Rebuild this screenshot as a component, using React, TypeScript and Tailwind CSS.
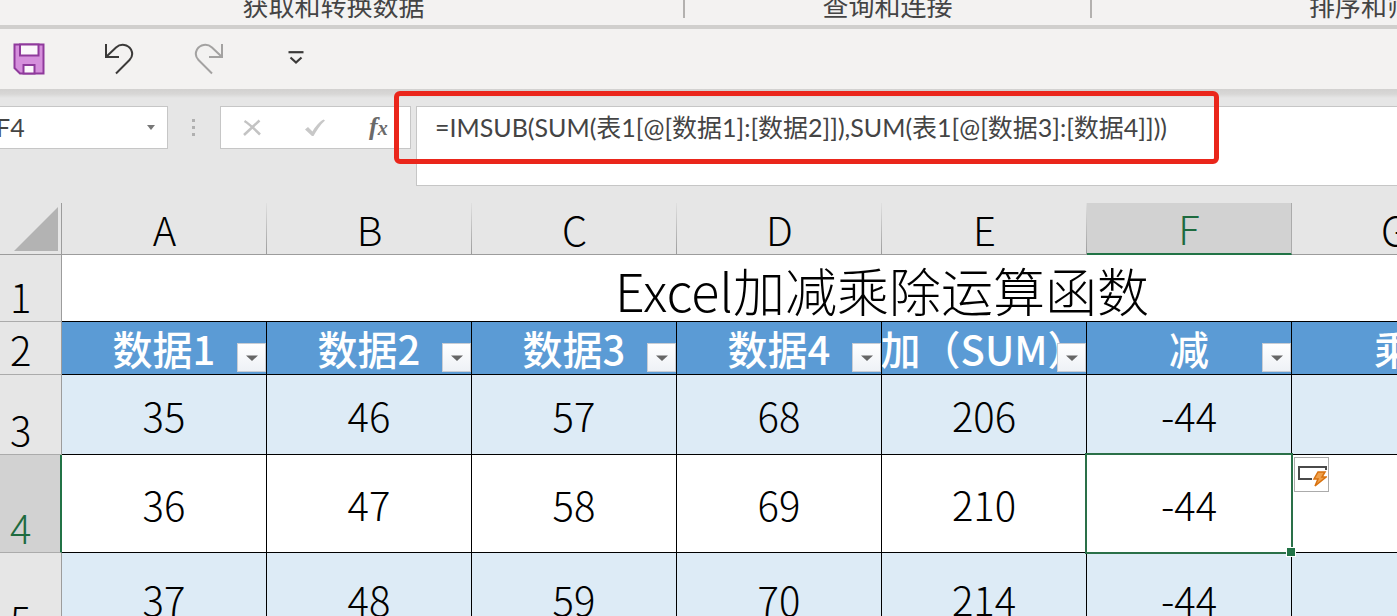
import { useState } from 'react';
import clsx from 'clsx';

const COLUMNS = ['A', 'B', 'C', 'D', 'E', 'F', 'G', 'H'];
const HEADERS = ['数据1', '数据2', '数据3', '数据4', '加（SUM）', '减', '乘', '除'];

interface Row {
  id: number;
  height: string;
  cells: string[];
}

const ROWS: Row[] = [
  { id: 3, height: 'h-20', cells: ['35', '46', '57', '68', '206', '-44', '', ''] },
  { id: 4, height: 'h-[98px]', cells: ['36', '47', '58', '69', '210', '-44', '', ''] },
  { id: 5, height: 'h-[92px]', cells: ['37', '48', '59', '70', '214', '-44', '', ''] },
];

const RIBBON_GROUPS = [
  { label: '获取和转换数据', width: '-ml-4 w-[701px]' },
  { label: '查询和连接', width: 'w-[407px]' },
  { label: '排序和筛选', width: 'w-[566px]' },
];

const ACTIVE = { col: 5, row: 4 };

function SaveIcon() {
  return (
    <svg width="32" height="32" viewBox="0 0 32 32" fill="none" stroke="#8f3a9c" strokeWidth="2">
      <path d="M1.5 1.5h29v29H7l-5.500-5.500z" fill="#d58fdc" />
      <path d="M7 1.500h18.500v11H7z" fill="#fbf7fb" />
      <path d="M10.500 30.500v-8.500h11v8.500z" fill="#fbf7fb" />
    </svg>
  );
}

function UndoIcon() {
  return (
    <svg width="30" height="32" viewBox="0 0 30 32" fill="none" stroke="#3b3a39" strokeWidth="2">
      <path d="M2 1v13h13" />
      <path d="M2 14L12 4.500C17 0 24 1.500 27 6.500c2 4 1 8-1.500 10.500L12 30.500" />
    </svg>
  );
}

function RedoIcon() {
  return (
    <svg width="30" height="32" viewBox="0 0 30 32" fill="none" stroke="#a3a2a1" strokeWidth="2">
      <path d="M28 1v13H15" />
      <path d="M28 14L18 4.500C13 0 6 1.500 3 6.500c-2 4-1 8 1.500 10.500L18 30.500" />
    </svg>
  );
}

function Ribbon() {
  return (
    <div className="flex h-[29px] shrink-0 overflow-hidden border-b-4 border-[#d0cfcd]">
      {RIBBON_GROUPS.map((g) => (
        <div key={g.label} className={clsx('flex shrink-0 items-end', g.width)}>
          <span className="mb-[2px] flex-1 whitespace-nowrap text-center text-[26px] leading-9 text-[#444444]">
            {g.label}
          </span>
          <span className="mb-[7px] h-9 w-[2px] bg-[#b3b1af]" />
        </div>
      ))}
    </div>
  );
}

function QuickAccess() {
  return (
    <div className="flex h-[60px] shrink-0 items-center pl-[13px]">
      <button aria-label="保存">
        <SaveIcon />
      </button>
      <button aria-label="撤消" className="ml-[59px]">
        <UndoIcon />
      </button>
      <button aria-label="恢复" className="ml-[60px]">
        <RedoIcon />
      </button>
      <button aria-label="自定义快速访问工具栏" className="ml-16">
        <svg width="16" height="16" viewBox="0 0 16 16" fill="none" stroke="#3b3a39" strokeWidth="2.200">
          <path d="M0.500 1.200h15" />
          <path d="M2.500 6.500l5.500 5 5.500-5" />
        </svg>
      </button>
    </div>
  );
}

function FormulaBar() {
  const [formula, setFormula] = useState(
    '=IMSUB(SUM(表1[@[数据1]:[数据2]]),SUM(表1[@[数据3]:[数据4]]))',
  );
  const [name, setName] = useState('F4');

  return (
    <div className="relative flex h-[114px] shrink-0 items-start bg-[linear-gradient(#d2d1d0,#d8d7d6_5px,#e6e6e6_9px)] pt-[17px] font-[Lato,'Noto_Sans_CJK_SC',sans-serif] text-[25px] text-[#444444]">
      <div className="flex h-[43px] w-[168px] items-center border border-l-0 border-[#c6c6c6] bg-white">
        <input
          aria-label="名称框"
          value={name}
          onChange={(e) => setName(e.target.value)}
          className="-ml-1 w-0 flex-1 outline-none"
        />
        <button aria-label="名称列表" className="mr-3 flex">
          <svg width="8" height="5" viewBox="0 0 8 5" fill="#777777">
            <path d="M0 0h8L4 5z" />
          </svg>
        </button>
      </div>

      <svg className="ml-6 mt-3" width="4" height="20" viewBox="0 0 4 20" fill="#b0b0b0">
        <path d="M0 1h3v3H0zM0 8h3v3H0zM0 15h3v3H0z" />
      </svg>

      <div className="ml-6 flex h-[43px] w-[191px] items-center border border-[#c6c6c6] bg-white pl-[22px]">
        <button aria-label="取消" className="flex">
          <svg width="18" height="18" viewBox="0 0 18 18" fill="none" stroke="#c3c3c3" strokeWidth="2.500">
            <path d="M1 16L16.500 1.500M1.500 2c5 3 10 8 15.500 13.500" />
          </svg>
        </button>
        <button aria-label="输入" className="ml-11 flex">
          <svg width="20" height="18" viewBox="0 0 20 18" fill="#c8c8c8">
            <path d="M0 10.500L3 8l4.500 4.500C10 8 14 3 18.500 0.500L20 1.500C15 6 11.500 11.500 8.500 17H7z" />
          </svg>
        </button>
        <button
          aria-label="插入函数"
          className="ml-11 font-['Liberation_Serif',serif] text-[26px] leading-6 font-bold text-[#6a6a6a] italic"
        >
          f<span className="text-xl">x</span>
        </button>
      </div>

      <textarea
        aria-label="编辑栏"
        value={formula}
        onChange={(e) => setFormula(e.target.value)}
        spellCheck={false}
        className="ml-[5px] h-20 min-w-0 flex-1 resize-none overflow-hidden border border-r-0 border-[#c6c6c6] bg-white pt-1 pl-[18px] leading-8 whitespace-nowrap outline-none"
      />

      {/* callout around the formula */}
      <div className="pointer-events-none absolute top-[2px] left-[394px] h-[73px] w-[825px] rounded-md border-5 border-[#ea261b]" />
    </div>
  );
}

function FilterButton({ label }: { label: string }) {
  return (
    <button
      aria-label={`筛选 ${label}`}
      className="absolute right-0 bottom-[2px] flex h-[29px] w-[29px] items-center justify-center border border-[#c9cdd4] bg-linear-to-b from-white to-[#eef1f6]"
    >
      <svg width="12" height="6" viewBox="0 0 12 6" fill="#666666">
        <path d="M0 0.500h12L6 6z" />
      </svg>
    </button>
  );
}

function Selection() {
  return (
    <>
      <div className="pointer-events-none absolute -inset-x-[2px] -inset-y-[2px] z-10 border-2 border-[#2a7048]" />
      <span className="absolute -right-1 -bottom-1 z-20 h-2 w-2 bg-[#217346] outline outline-white" />
      <button
        aria-label="快速填充选项"
        className="absolute top-[2px] left-full z-20 ml-[3px] flex h-[35px] w-[35px] items-center justify-center border border-[#ababab] bg-white"
      >
        <svg width="30" height="24" viewBox="0 0 30 24" fill="none">
          <path d="M15 16H2V4h27v3" stroke="#4a4a4a" strokeWidth="2" />
          <path d="M21 9h7l-3 5h4L18 23l3-7h-4z" fill="#f0a04a" stroke="#d8720f" strokeWidth="1.500" />
        </svg>
      </button>
    </>
  );
}

function RowHeader({ id, active }: { id: number; active?: boolean }) {
  return (
    <th
      scope="row"
      className={clsx(
        'border-b border-b-[#ababab] pb-[5px] pl-[10px] text-left align-bottom font-light leading-10',
        active
          ? 'border-r-2 border-r-[#217346] bg-[#d2d2d2] text-[#1e6b3f]'
          : 'border-r border-r-[#9c9c9c] bg-[#e6e6e6]',
      )}
    >
      {id}
    </th>
  );
}

function Sheet() {
  return (
    <table className="w-full min-w-[1702px] table-fixed border-separate border-spacing-0 text-[40px] leading-none font-light text-black">
      <colgroup>
        <col className="w-[62px]" />
        {COLUMNS.map((c) => (
          <col key={c} className="w-[205px]" />
        ))}
      </colgroup>
      <thead>
        <tr className="h-[52px]">
          <td className="border-r border-b border-[#9c9c9c] p-0">
            <svg className="ml-auto mr-[3px]" width="44" height="44" viewBox="0 0 44 44" fill="#b3b3b3">
              <path d="M44 0v44H0z" />
            </svg>
          </td>
          {COLUMNS.map((c, i) => (
            <th
              key={c}
              scope="col"
              className={clsx(
                'p-0 font-light',
                i === ACTIVE.col
                  ? 'border-r border-b-2 border-r-[#ababab] border-b-[#217346] bg-[#d2d2d2] text-[#1e6b3f]'
                  : 'border-b border-[#9c9c9c] bg-[linear-gradient(#e0e0e0,#9c9c9c)] bg-[length:1px_100%] bg-right bg-no-repeat',
              )}
            >
              {c}
            </th>
          ))}
        </tr>
      </thead>
      <tbody>
        <tr className="h-[67px]">
          <RowHeader id={1} />
          <td
            colSpan={COLUMNS.length}
            className="border-b border-black bg-white p-0 pt-1 text-center text-[52px]"
          >
            Excel加减乘除运算函数
          </td>
        </tr>
        <tr className="h-[53px]">
          <RowHeader id={2} />
          {HEADERS.map((h) => (
            <td
              key={h}
              className="relative border-r border-b border-black bg-[#5b9bd5] p-0 font-medium text-white"
            >
              <div className="flex justify-center overflow-hidden leading-[52px] whitespace-nowrap">
                <span className="shrink-0">{h}</span>
              </div>
              <FilterButton label={h} />
            </td>
          ))}
        </tr>
        {ROWS.map((row) => (
          <tr key={row.id} className={row.height}>
            <RowHeader id={row.id} active={row.id === ACTIVE.row} />
            {row.cells.map((value, i) => (
              <td
                key={COLUMNS[i]}
                className={clsx(
                  'relative border-r border-b border-black p-0 text-center',
                  row.id % 2 ? 'bg-[#ddebf6]' : 'bg-white',
                )}
              >
                {value}
                {row.id === ACTIVE.row && i === ACTIVE.col && <Selection />}
              </td>
            ))}
          </tr>
        ))}
      </tbody>
    </table>
  );
}

export default function App() {
  return (
    <div
      lang="zh-CN"
      className="flex h-screen flex-col overflow-hidden bg-[#f3f2f1] font-['Noto_Sans_CJK_SC',sans-serif]"
    >
      <Ribbon />
      <QuickAccess />
      <FormulaBar />
      <div className="min-h-0 flex-1 overflow-hidden bg-[#e6e6e6]">
        <Sheet />
      </div>
    </div>
  );
}
